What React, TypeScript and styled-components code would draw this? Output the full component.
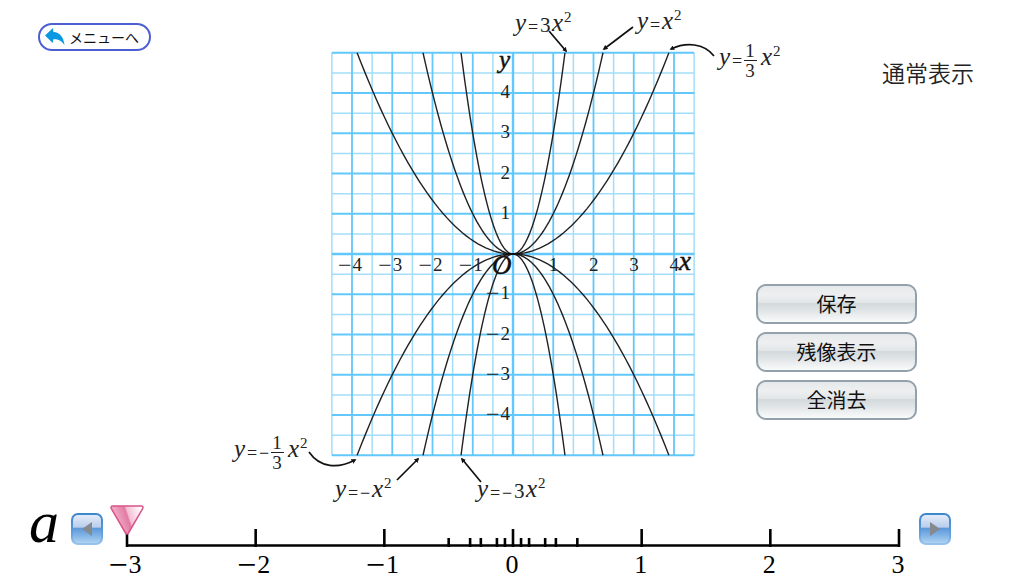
import React, { useState } from "react";
import styled, { createGlobalStyle } from "styled-components";

const GlobalStyle = createGlobalStyle`
  *, *::before, *::after { box-sizing: border-box; }
  body {
    margin: 0;
    background: #fff;
    color: #111;
    font-family: "Noto Sans CJK JP", "Noto Sans", sans-serif;
  }
`;

const SERIF = '"Liberation Serif", serif';

const Page = styled.div`
  display: flex;
  flex-direction: column;
  min-height: 100vh;
`;

const Main = styled.main`
  display: grid;
  grid-template-columns: 1fr 364px 1fr;
`;

const MenuArea = styled.nav`
  padding: 23px 0 0 38px;
`;

const MenuButton = styled.button`
  display: inline-flex;
  align-items: center;
  gap: 4px;
  width: 113px;
  height: 28px;
  padding: 0 0 0 5px;
  border: 2px solid #4c5fd2;
  border-radius: 14px;
  background: #fff;
  color: #111;
  font: 400 14px "Noto Sans CJK JP", sans-serif;
  line-height: 24px;
  white-space: nowrap;
  cursor: pointer;
`;

const SidePanel = styled.aside`
  display: flex;
  flex-direction: column;
  justify-content: space-between;
  padding: 55px 50px 85px 62px;
`;

const ModeTitle = styled.h1`
  margin: 0;
  align-self: flex-end;
  color: #222;
  font-size: 23px;
  font-weight: 350;
  line-height: 34px;
`;

const Actions = styled.div`
  display: flex;
  flex-direction: column;
  gap: 8px;
`;

const ActionButton = styled.button`
  width: 161px;
  height: 40px;
  padding: 0;
  border: 2px solid #93a1ad;
  border-radius: 10px;
  background: linear-gradient(#e6e9ea 0%, #eef0f0 25%, #e2e5e6 46%, #d2d9dc 47%, #dde2e4 65%, #fafbfb 100%);
  color: #111;
  font: 400 20px "Noto Sans CJK JP", sans-serif;
  line-height: 34px;
  cursor: pointer;
`;

const Plot = styled.svg`
  display: block;
  width: 364px;
  height: 505px;
  overflow: visible;
  font-family: ${SERIF};
`;

const ControlBar = styled.section`
  display: flex;
  align-items: flex-start;
  height: 70px;
  padding: 0 73px 0 29px;
`;

const VariableName = styled.label`
  width: 42px;
  color: #000;
  font: italic 60px ${SERIF};
  line-height: 34px;
`;

const StepButton = styled.button`
  display: grid;
  place-items: center;
  flex: none;
  width: 32px;
  height: 32px;
  margin-top: 8px;
  padding: 0;
  border: 2px solid transparent;
  border-radius: 7px;
  background:
    linear-gradient(#e4ecf8 0%, #b9cdec 44%, #5c97d8 46%, #7db0e4 70%, #add3f2 100%) padding-box,
    linear-gradient(#3a86cb, #5c9cda 60%, #9cc5ec) border-box;
  cursor: pointer;
`;

const Scale = styled.div`
  position: relative;
  flex: 1;
  margin: 0 20px 0 24px;
`;

const ScaleDrawing = styled.svg`
  display: block;
  width: 100%;
  height: 70px;
  overflow: visible;
  font: 26px ${SERIF};
`;

const Pin = styled.svg`
  position: absolute;
  top: 0;
  width: 34px;
  height: 30px;
  transform: translateX(-50%);
`;

const Slider = styled.input`
  position: absolute;
  top: 0;
  left: -16px;
  width: calc(100% + 32px);
  height: 44px;
  margin: 0;
  opacity: 0;
  cursor: pointer;
`;

const UNIT = 40.25;
const HALF_WIDTH = UNIT * 4.5;
const HALF_HEIGHT = UNIT * 5;

const range = (from: number, to: number) =>
  Array.from({ length: to - from + 1 }, (_, i) => from + i);

function curvePath(a: number) {
  const limit = Math.sqrt(5 / Math.abs(a));
  const points = range(-40, 40).map((i) => {
    const x = (i / 40) * limit;
    return `${(x * UNIT).toFixed(2)} ${(-a * x * x * UNIT).toFixed(2)}`;
  });
  return "M" + points.join(" L");
}

function Grid() {
  return (
    <g fill="none">
      <g stroke="#a3def9" strokeWidth="1.5">
        {range(-5, 4).map((i) => {
          const x = (i + 0.5) * UNIT;
          return <line key={`v${i}`} x1={x} x2={x} y1={-HALF_HEIGHT} y2={HALF_HEIGHT} />;
        })}
        {range(-5, 4).map((i) => {
          const y = (i + 0.5) * UNIT;
          return <line key={`h${i}`} x1={-HALF_WIDTH} x2={HALF_WIDTH} y1={y} y2={y} />;
        })}
      </g>
      <g stroke="#62c8fb">
        {range(-4, 4).map((i) => (
          <line key={`v${i}`} x1={i * UNIT} x2={i * UNIT} y1={-HALF_HEIGHT} y2={HALF_HEIGHT} strokeWidth={i === 0 ? 2.4 : 1.8} />
        ))}
        {range(-5, 5).map((i) => (
          <line key={`h${i}`} x1={-HALF_WIDTH} x2={HALF_WIDTH} y1={i * UNIT} y2={i * UNIT} strokeWidth={i === 0 ? 2.4 : 1.8} />
        ))}
      </g>
    </g>
  );
}

/* The minus sign is set larger than the digit and lowered to the digit's middle. */
function SignedNumber({ value, minusSize, drop }: { value: number; minusSize: number; drop: number }) {
  if (value >= 0) return <>{value}</>;
  return (
    <>
      <tspan fontSize={minusSize} dy={drop}>−</tspan>
      <tspan dx={1} dy={-drop}>{-value}</tspan>
    </>
  );
}

function AxisNumbers() {
  return (
    <g fontSize="19" fill="#222">
      {range(-4, 4).filter(Boolean).map((n) => (
        <React.Fragment key={n}>
          <text x={n * UNIT + (n < 0 ? 10 : 5)} y={17} textAnchor="end">
            <SignedNumber value={n} minusSize={24} drop={2} />
          </text>
          <text x={-3} y={-n * UNIT + 5} textAnchor="end">
            <SignedNumber value={n} minusSize={24} drop={2} />
          </text>
        </React.Fragment>
      ))}
    </g>
  );
}

const TOKEN_WIDTH: Record<string, number> = { y: 13, "=": 12, "−": 12, "3": 12, f: 17, x: 12, "²": 8 };

/* In a formula's source, "f" is the fraction one third. */
function Formula({ source, x, y }: { source: string; x: number; y: number }) {
  let cursor = 0;
  return (
    <g transform={`translate(${x} ${y})`} fill="#222">
      {source.split("").map((token, i) => {
        const at = cursor;
        cursor += TOKEN_WIDTH[token];
        if (token === "f") {
          return (
            <g key={i} fontSize="19" textAnchor="middle">
              <text x={at + 6} y={-8}>1</text>
              <line x1={at} x2={at + 13} y1={-4.5} y2={-4.5} stroke="#222" strokeWidth="1" />
              <text x={at + 6} y={12}>3</text>
            </g>
          );
        }
        if (token === "²") return <text key={i} x={at} y={-9} fontSize="15">2</text>;
        if (token === "x" || token === "y") return <text key={i} x={at} fontSize="25" fontStyle="italic">{token}</text>;
        return <text key={i} x={at} y={token === "3" ? 1 : 2} fontSize={token === "3" ? 21 : 18}>{token}</text>;
      })}
    </g>
  );
}

const ARROWS = [
  "M36 -223 L53 -203",
  "M120 -227 L91 -205",
  "M201 -198 C191 -211 173 -212 158 -205",
  "M-204 198 C-193 214 -175 215 -158 206",
  "M-116 226 L-95 205",
  "M-32 228 L-51 205",
];

function Graph() {
  return (
    <Plot viewBox="-183 -254 364 505" role="img" aria-label="y=ax² のグラフ">
      <defs>
        <marker id="head" viewBox="0 0 6 6" refX="4" refY="3" markerWidth="5" markerHeight="5" markerUnits="userSpaceOnUse" orient="auto">
          <path d="M0 0 L6 3 L0 6 Z" fill="#111" />
        </marker>
      </defs>
      <Grid />
      <AxisNumbers />
      <g fill="none" stroke="#222" strokeWidth="1.4">
        {[3, 1, 1 / 3, -1 / 3, -1, -3].map((a) => (
          <path key={a} d={curvePath(a)} />
        ))}
        <line x1="-7" x2="7" y1="0" y2="0" stroke="#111" strokeWidth="2" />
      </g>
      <g fill="#111" fontStyle="italic" stroke="#111" strokeWidth="0.5">
        <text x="-14" y="-186" fontSize="25">y</text>
        <text x="166" y="16" fontSize="27">x</text>
        <text x="-21" y="20" fontSize="27">O</text>
      </g>
      <g fill="none" stroke="#111" strokeWidth="1.7">
        {ARROWS.map((d) => <path key={d} d={d} markerEnd="url(#head)" />)}
      </g>
      <Formula source="y=3x²" x={2} y={-223} />
      <Formula source="y=x²" x={124} y={-225} />
      <Formula source="y=fx²" x={206} y={-189} />
      <Formula source="y=−fx²" x={-279} y={203} />
      <Formula source="y=−x²" x={-178} y={243} />
      <Formula source="y=−3x²" x={-36} y={243} />
    </Plot>
  );
}

const STOPS = [-3, -2, -1, -1 / 2, -1 / 3, -1 / 4, -1 / 8, -1 / 16, 0, 1 / 16, 1 / 8, 1 / 4, 1 / 3, 1 / 2, 1, 2, 3];
const percent = (value: number) => `${((value + 3) / 6) * 100}%`;

function ScaleRuler() {
  return (
    <ScaleDrawing aria-hidden="true">
      <line x1="0" x2="100%" y1="40.5" y2="40.5" stroke="#000" strokeWidth="2.6" />
      {STOPS.map((s) => (
        <line key={s} x1={percent(s)} x2={percent(s)} y1={Number.isInteger(s) ? 24 : 33} y2="42" stroke="#000" strokeWidth="2.6" />
      ))}
      {range(-3, 3).map((n) => (
        <text key={n} x={percent(n)} y="68" dx={n < 0 ? -2 : -1} textAnchor="middle">
          <SignedNumber value={n} minusSize={34} drop={3} />
        </text>
      ))}
    </ScaleDrawing>
  );
}

export default function App() {
  const [a, setA] = useState(-3);
  const previous = () => setA((v) => [...STOPS].reverse().find((s) => s < v - 0.001) ?? v);
  const next = () => setA((v) => STOPS.find((s) => s > v + 0.001) ?? v);

  return (
    <>
      <GlobalStyle />
      <Page>
        <Main>
          <MenuArea>
            <MenuButton type="button">
              <svg width="20" height="18" viewBox="0 0 20 18" aria-hidden="true">
                <path d="M0 7.5 L8 0 L8.4 4 C15 4.500 18.500 9 19.500 17 C16 12.300 13 11 8.300 11.300 L7.700 15 Z" fill="#0b98e2" />
              </svg>
              メニューへ
            </MenuButton>
          </MenuArea>
          <Graph />
          <SidePanel>
            <ModeTitle>通常表示</ModeTitle>
            <Actions>
              <ActionButton type="button">保存</ActionButton>
              <ActionButton type="button">残像表示</ActionButton>
              <ActionButton type="button">全消去</ActionButton>
            </Actions>
          </SidePanel>
        </Main>
        <ControlBar>
          <VariableName htmlFor="coefficient">a</VariableName>
          <StepButton type="button" aria-label="前へ" onClick={previous}>
            <svg width="10" height="16" viewBox="0 0 10 16" aria-hidden="true">
              <path d="M10 1 V15 L0 8 Z" fill="#858a90" />
            </svg>
          </StepButton>
          <Scale>
            <ScaleRuler />
            <Pin viewBox="0 0 34 30" style={{ left: percent(a) }} aria-hidden="true">
              <defs>
                <linearGradient id="pin" x1="0" y1="0.3" x2="1" y2="0">
                  <stop offset="0" stopColor="#f6b9cf" />
                  <stop offset="0.45" stopColor="#e27ba4" />
                  <stop offset="0.5" stopColor="#f3bdd2" />
                  <stop offset="0.9" stopColor="#fff" />
                </linearGradient>
              </defs>
              <path d="M3 1 H31 Q34 1 32.500 4 L18.500 28 Q17 30 15.500 28 L1.500 4 Q0 1 3 1 Z" fill="url(#pin)" stroke="#d9538a" strokeWidth="1.500" />
            </Pin>
            <Slider
              id="coefficient"
              type="range"
              min={-3}
              max={3}
              step="any"
              value={a}
              onChange={(e) => setA(Number(e.target.value))}
            />
          </Scale>
          <StepButton type="button" aria-label="次へ" onClick={next}>
            <svg width="10" height="16" viewBox="0 0 10 16" aria-hidden="true">
              <path d="M0 1 V15 L10 8 Z" fill="#858a90" />
            </svg>
          </StepButton>
        </ControlBar>
      </Page>
    </>
  );
}
